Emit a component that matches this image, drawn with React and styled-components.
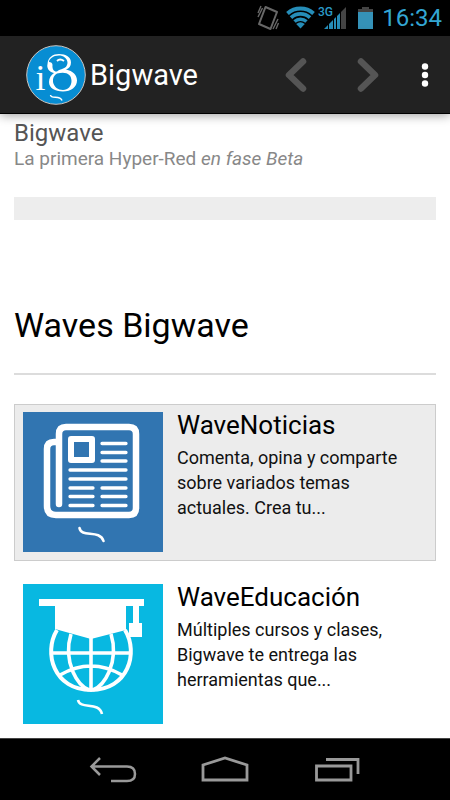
import React from "react";
import styled, { createGlobalStyle } from "styled-components";

const GlobalStyle = createGlobalStyle`
  * { box-sizing: border-box; }
  body {
    margin: 0;
    background: #fff;
    color: #000;
    font-family: Roboto, "Open Sans", sans-serif;
  }
  h1, h2, h3, p { margin: 0; font-weight: 400; }
`;

const Screen = styled.div`
  display: flex;
  flex-direction: column;
  min-height: 100vh;
`;

const StatusBar = styled.div`
  display: flex;
  align-items: center;
  justify-content: flex-end;
  height: 36px;
  padding-right: 8px;
  background: #000;
`;

const Glyph = styled.svg`
  display: block;
  flex: none;
`;

const Clock = styled.time`
  padding-left: 8px;
  color: #33a6d3;
  font-size: 24px;
  line-height: 36px;
`;

const ActionBar = styled.header`
  display: flex;
  align-items: center;
  height: 78px;
  padding: 0 4px 0 26px;
  background: #222;
  border-bottom: 1px solid #000;
  box-shadow: 0 1px 10px rgba(0, 0, 0, 0.4);
`;

const Brand = styled.a`
  display: flex;
  align-items: center;
  gap: 4px;
  margin-right: auto;
  color: #fff;
  font-size: 29px;
  line-height: 32px;
  text-decoration: none;
`;

const IconButton = styled.button`
  display: flex;
  align-items: center;
  justify-content: center;
  width: ${(p) => p.$width}px;
  height: 100%;
  padding: 0;
  border: 0;
  background: none;
`;

const Content = styled.main`
  flex: 1;
  padding: 4px 14px;
`;

const SiteTitle = styled.h1`
  color: #555;
  font-size: 24px;
  line-height: 30px;
`;

const Tagline = styled.p`
  color: #888;
  font-size: 19px;
  line-height: 22px;
`;

const Strip = styled.div`
  height: 23px;
  margin-top: 27px;
  background: #ededed;
`;

const SectionTitle = styled.h2`
  margin-top: 84px;
  padding-bottom: 27px;
  border-bottom: 2px solid #dcdcdc;
  font-size: 34px;
  line-height: 42px;
`;

const CardList = styled.div`
  display: flex;
  flex-direction: column;
  gap: 15px;
  margin-top: 29px;
`;

const Card = styled.a`
  display: flex;
  gap: 14px;
  padding: 7px 8px 8px;
  border: 1px solid ${(p) => (p.$active ? "#ccc" : "transparent")};
  background: ${(p) => (p.$active ? "#ececec" : "transparent")};
  color: #000;
  text-decoration: none;
`;

const CardBody = styled.div`
  flex: 1;
  min-width: 0;
  padding-right: 12px;
`;

const CardTitle = styled.h3`
  padding-bottom: 7px;
  font-size: 26px;
  line-height: 26px;
`;

const CardText = styled.p`
  color: #111;
  font-size: 18px;
  line-height: 25px;
`;

const NavBar = styled.nav`
  display: flex;
  justify-content: center;
  height: 62px;
  background: #000;
  border-top: 1px solid #444;
`;

function VibrateIcon() {
  return (
    <Glyph width="30" height="28" viewBox="0 0 30 28" fill="none" stroke="#686868">
      <path d="M9.500 3 21 8 14.500 25 3 20z" strokeWidth="2" strokeLinejoin="round" />
      <path d="M2 9 5 2M2 13 6.500 4M17 25 22 15M20 25 22.500 19" strokeWidth="1.400" />
    </Glyph>
  );
}

function WifiIcon() {
  return (
    <Glyph width="32" height="24" viewBox="0 0 32 24" fill="none" stroke="#268db8" strokeWidth="4">
      <path d="M1.500 7.500A19.500 19.500 0 0 1 27.500 7.500" />
      <path d="M5 11.600A14 14 0 0 1 24 11.600" strokeWidth="3.800" />
      <path d="M8.500 15.500A9 9 0 0 1 20.500 15.500" strokeWidth="3.500" />
      <path d="M14.500 22.500 10.200 18Q14.500 14.500 18.800 18z" fill="#268db8" stroke="none" />
    </Glyph>
  );
}

function SignalIcon() {
  return (
    <Glyph width="40" height="24" viewBox="0 0 40 24">
      <text x="0" y="10" fill="#2b9bc8" fontFamily="Roboto, sans-serif" fontSize="12" fontWeight="500">3G</text>
      <path d="M6 23 10 19V23zM11 18 15 14V23H11zM16 13 18 11V23H16zM19 10 22 7V23H19z" fill="#268db8" />
      <path d="M23 6 28 1V23H23z" fill="#444" />
    </Glyph>
  );
}

function BatteryIcon() {
  return (
    <Glyph width="16" height="24" viewBox="0 0 16 24">
      <path d="M4 1H11V3H15V7H0V3H4z" fill="#444" />
      <path d="M0 6H15V23H0z" fill="#3592b8" />
    </Glyph>
  );
}

function BrandLogo() {
  return (
    <Glyph width="60" height="60" viewBox="0 0 60 60">
      <circle cx="30" cy="30" r="29.300" fill="#078dd3" stroke="#c9c4c0" />
      <text x="9.500" y="45" fill="#fff" fontFamily="Liberation Serif, serif" fontSize="36">i</text>
      <path
        fill="#fff"
        fillRule="evenodd"
        d="M21.500 19C22 12 27 9 33 9C40 9 45 12 45 17.500C45 21 43 23.500 40 24.500C47 26 51 30 51 35.500C51 42 45 46.500 37 46.500C29 46.500 23 43 23 37C23 33 25 30 28 28C23 27 20.500 23 21.500 19ZM26.500 20C26 24 28 27 31 26.500C34 23.500 41 24.500 41.500 18C41.500 13 37 10.500 33 10.500C27 10.500 23 14 23 17C25 17 26.500 18 26.500 20ZM31 28.500C28 30.500 26.500 33 27 37C28 42 32 45 37 45C42 45 45.500 41 45.500 36C45.500 29 40 26 31 28.500Z"
      />
      <path d="M31 16Q34 13 38 16" fill="none" stroke="#fff" strokeWidth="1.800" />
      <path d="M24.500 50C25 54.500 34 50 36 55.500" fill="none" stroke="#fff" strokeWidth="1.500" />
    </Glyph>
  );
}

function Chevron({ forward }) {
  return (
    <Glyph width="22" height="34" viewBox="0 0 22 34" fill="none" stroke="#555" strokeWidth="6.500" strokeLinecap="round" strokeLinejoin="round">
      <path d={forward ? "M4 3.500 18 17 4 30.500" : "M18 3.500 4 17 18 30.500"} />
    </Glyph>
  );
}

function NewsPicture() {
  return (
    <Glyph width="140" height="140" viewBox="0 0 140 140" fill="none" stroke="#fff" strokeLinecap="round">
      <path d="M0 0H140V140H0z" fill="#3175b1" stroke="none" />
      <path d="M36 92V22Q36 15 43 15H106Q113 15 113 22V96Q113 103 106 103H33Q24 103 24 94V37Q24 30 31 30H35" strokeWidth="6.500" />
      <path d="M48 27H69V48H48z" strokeWidth="6" strokeLinejoin="round" />
      <path d="M79 31.500H103M79 40.500H103M79 49H103M47 58H103M47 67H103M47 76H70M79 76H103M47 84.500H70M79 84.500H103M47 93.500H70M79 93.500H103" strokeWidth="3.300" />
      <path d="M56.500 116C58 126 77 117 80.500 129" strokeWidth="2.600" />
    </Glyph>
  );
}

function EducationPicture() {
  return (
    <Glyph width="140" height="140" viewBox="0 0 140 140" fill="none" stroke="#fff">
      <path d="M0 0H140V140H0z" fill="#08b8e1" stroke="none" />
      <path d="M34 46C20 69 31 106 68 106C105 106 116 69 102 46" strokeWidth="4" />
      <path d="M68 54V106M28 69H108M48 50Q42 69 50 88Q56 102 66 106M88 50Q94 69 86 88Q80 102 70 106M37 91Q68 73 99 91" strokeWidth="3.600" />
      <path d="M16 15H121V22H116V39H119V53H106V39H110V22H103V46L68 55 32 45V22H16z" fill="#fff" stroke="none" />
      <path d="M55 116C57 126 76 117 79 130" strokeWidth="2.600" />
    </Glyph>
  );
}

const waves = [
  {
    title: "WaveNoticias",
    text: "Comenta, opina y comparte sobre variados temas actuales. Crea tu...",
    Picture: NewsPicture,
    active: true,
  },
  {
    title: "WaveEducación",
    text: "Múltiples cursos y clases, Bigwave te entrega las herramientas que...",
    Picture: EducationPicture,
    active: false,
  },
];

export default function App() {
  return (
    <Screen>
      <GlobalStyle />
      <StatusBar>
        <VibrateIcon />
        <WifiIcon />
        <SignalIcon />
        <BatteryIcon />
        <Clock>16:34</Clock>
      </StatusBar>
      <ActionBar>
        <Brand href="#">
          <BrandLogo />
          Bigwave
        </Brand>
        <IconButton $width={72} aria-label="Atrás">
          <Chevron />
        </IconButton>
        <IconButton $width={72} aria-label="Adelante">
          <Chevron forward />
        </IconButton>
        <IconButton $width={42} aria-label="Menú">
          <Glyph width="8" height="24" viewBox="0 0 8 24" fill="#fff">
            <circle cx="4" cy="3.500" r="3.200" />
            <circle cx="4" cy="12" r="3.200" />
            <circle cx="4" cy="20.500" r="3.200" />
          </Glyph>
        </IconButton>
      </ActionBar>
      <Content>
        <SiteTitle>Bigwave</SiteTitle>
        <Tagline>
          La primera Hyper-Red <em>en fase Beta</em>
        </Tagline>
        <Strip />
        <SectionTitle>Waves Bigwave</SectionTitle>
        <CardList>
          {waves.map(({ title, text, Picture, active }) => (
            <Card key={title} href="#" $active={active}>
              <Picture />
              <CardBody>
                <CardTitle>{title}</CardTitle>
                <CardText>{text}</CardText>
              </CardBody>
            </Card>
          ))}
        </CardList>
      </Content>
      <NavBar>
        <IconButton $width={112} aria-label="Volver">
          <Glyph width="48" height="28" viewBox="0 0 48 28" fill="none" stroke="#999" strokeWidth="2.500">
            <path d="M11 2 2.500 10.500 11 19M3 10.500H38Q46 10.500 46 18Q46 25 38 25H22" />
          </Glyph>
        </IconButton>
        <IconButton $width={112} aria-label="Inicio">
          <Glyph width="48" height="28" viewBox="0 0 48 28" fill="none" stroke="#999" strokeWidth="2.800">
            <path d="M2 24V9L24 2 46 9V24z" />
          </Glyph>
        </IconButton>
        <IconButton $width={112} aria-label="Recientes">
          <Glyph width="48" height="28" viewBox="0 0 48 28" fill="none" stroke="#999" strokeWidth="2.800">
            <path d="M3.500 10H38V24H3.500zM13 3.500H45V18" />
          </Glyph>
        </IconButton>
      </NavBar>
    </Screen>
  );
}
